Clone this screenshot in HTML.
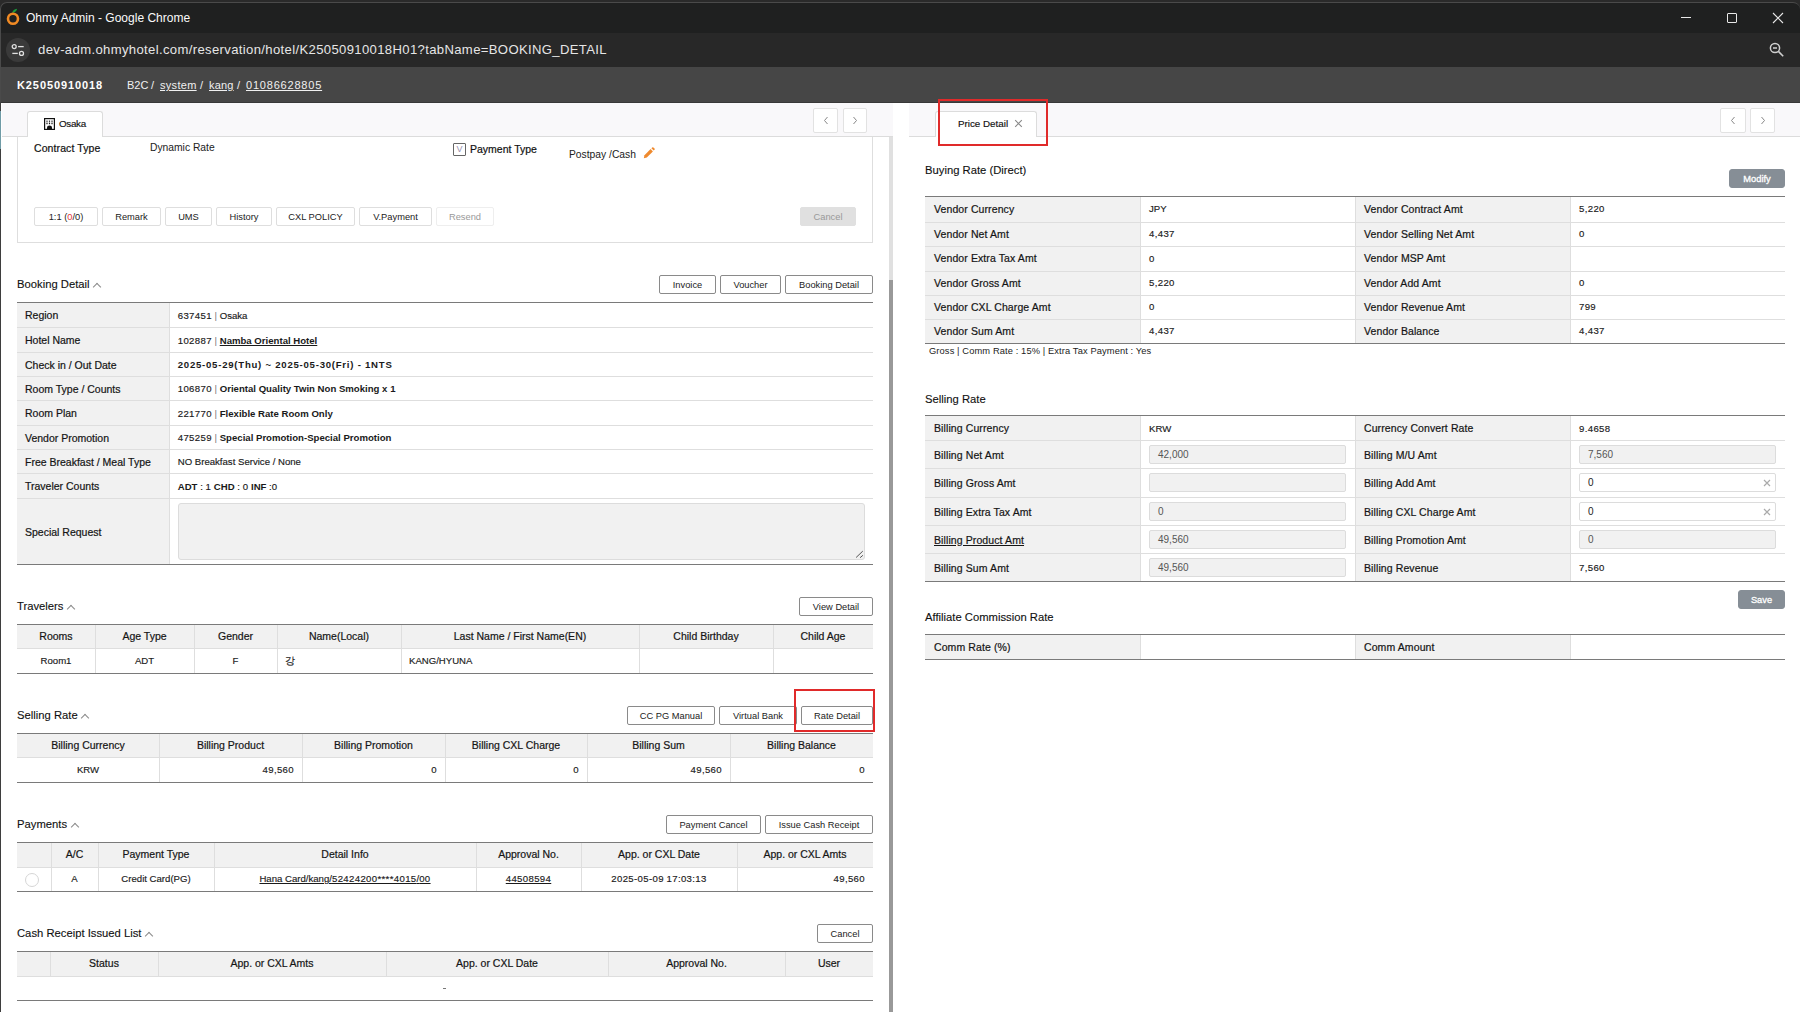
<!DOCTYPE html>
<html><head><meta charset="utf-8">
<style>
*{box-sizing:border-box;margin:0;padding:0}
html,body{width:1800px;height:1012px;overflow:hidden;background:#fff;font-family:"Liberation Sans",sans-serif;color:#222}
.a{position:absolute}
#outer{left:0;top:0;width:1800px;height:33px;background:#2a2a2a}
#title{left:0;top:2px;width:1800px;height:31px;background:#1f2020;border-top:1px solid #4a4a4a;border-left:1px solid #4a4a4a;border-top-left-radius:7px;border-top-right-radius:7px}
#url{left:0;top:33px;width:1800px;height:34px;background:#282828;border-left:1px solid #4a4a4a}
#hdr{left:0;top:67px;width:1800px;height:36px;background:#464646;border-left:1px solid #4a4a4a;border-bottom:1px solid #383838}
.tt{color:#fff;font-size:12px;white-space:nowrap}
.tabbar{background:#f9f8fa;border-bottom:1px solid #dcdcdc}
.tab{background:#fff;border:1px solid #dcdcdc;border-bottom:none;border-radius:3px 3px 0 0}
.nav{background:#fff;border:1px solid #e2e2e2;border-radius:2px}
.btn{position:absolute;height:19px;border:1px solid #8a8a8a;border-radius:2px;background:#fff;font-size:9.3px;line-height:19px;text-align:center;white-space:nowrap;color:#222}
.btnl{border-color:#dedede}
.sec{position:absolute;font-size:11.25px;white-space:nowrap;color:#111;-webkit-text-stroke:0.12px #111}
.caret{display:inline-block;width:6px;height:6px;border-left:1.5px solid #8a8a8a;border-top:1.5px solid #8a8a8a;transform:rotate(45deg);margin-left:4.5px;position:relative;top:1.5px}
table{border-collapse:collapse;table-layout:fixed;position:absolute}
td,th{font-size:10px;white-space:nowrap;overflow:hidden;padding:0 8px;border:1px solid #dedede;color:#222}
tr:first-child td,tr:first-child th{border-top:none}
td:first-child,th:first-child{border-left:none}
td:last-child,th:last-child{border-right:none}
.tbl{border-top:1.5px solid #777;border-bottom:1.5px solid #777}
.lab{background:#f1f1f1;font-size:10.5px;color:#1a1a1a}
th{background:#f1f1f1;font-weight:normal;font-size:10.5px;text-align:center;color:#1a1a1a}
.c{text-align:center}
.r{text-align:right}
.b{font-weight:bold}
.u{text-decoration:underline}
.inp{position:absolute;height:19px;background:#f1f1f1;border:1px solid #dcdcdc;border-radius:2px;font-size:10px;line-height:17px;padding-left:8px;color:#555}
.inpw{background:#fff;color:#222}
.t{white-space:nowrap}
.t b{font-weight:bold;-webkit-text-stroke:0}
.sep{font-style:normal;color:#777;-webkit-text-stroke:0}
.d{letter-spacing:0.35px}
.wide,.wide .d{letter-spacing:0.75px}
</style></head><body>
<!-- chrome -->
<div id="outer" class="a"></div>
<div id="title" class="a"></div>
<div id="url" class="a"></div>
<div id="hdr" class="a"></div>

<svg class="a" style="left:0px;top:0px" width="24" height="28" viewBox="0 0 24 28">
<path d="M12.2 12.9 C12.4 10.9 14 9.2 17.1 8.8 C16.8 11 15 12.6 12.2 12.9Z" fill="#1b9b3c"/>
<circle cx="13" cy="18.8" r="5" fill="none" stroke="#f08a24" stroke-width="2.6"/>
</svg>
<div class="a tt" style="left:26px;top:10px;font-size:12px;line-height:16px;color:#fafafa">Ohmy Admin - Google Chrome</div>
<div class="a" style="left:1681px;top:17px;width:10px;height:1px;background:#e8e8e8"></div>
<div class="a" style="left:1727px;top:13px;width:10px;height:10px;border:1px solid #e8e8e8;border-radius:1px"></div>
<svg class="a" style="left:1772px;top:12px" width="12" height="12" viewBox="0 0 12 12"><path d="M1 1L11 11M11 1L1 11" stroke="#e8e8e8" stroke-width="1.1"/></svg>
<div class="a" style="left:6px;top:38px;width:24px;height:24px;border-radius:12px;background:#3a3a3a"></div>
<svg class="a" style="left:11px;top:43px" width="14" height="14" viewBox="0 0 14 14">
<circle cx="3.2" cy="3.6" r="2" fill="none" stroke="#e0e0e0" stroke-width="1.3"/><path d="M7.1 3.6H12.7" stroke="#e0e0e0" stroke-width="1.3"/>
<circle cx="10.5" cy="10.4" r="2" fill="none" stroke="#e0e0e0" stroke-width="1.3"/><path d="M1.3 10.4H6.8" stroke="#e0e0e0" stroke-width="1.3"/>
</svg>
<div class="a tt" style="left:38px;top:41px;font-size:13.1px;line-height:17px;letter-spacing:0.35px;color:#e6e6e6">dev-adm.ohmyhotel.com/reservation/hotel/K25050910018H01?tabName=BOOKING_DETAIL</div>
<svg class="a" style="left:1768px;top:41px" width="18" height="18" viewBox="0 0 18 18"><circle cx="7" cy="7" r="4.6" fill="none" stroke="#cfcfcf" stroke-width="1.5"/><path d="M5 7H9" stroke="#cfcfcf" stroke-width="1.5"/><path d="M10.4 10.4L15.2 15.2" stroke="#cfcfcf" stroke-width="1.6"/></svg>
<div class="a tt b" style="left:17px;top:77px;font-size:11px;line-height:16px;letter-spacing:0.9px">K25050910018</div>
<div class="a tt" style="left:127px;top:77px;font-size:11px;line-height:16px;color:#f0f0f0">B2C</div>
<div class="a tt" style="left:151px;top:77px;font-size:11px;line-height:16px;color:#f0f0f0">/</div>
<div class="a tt u" style="left:160px;top:77px;font-size:11px;line-height:16px;letter-spacing:0.3px;color:#f0f0f0">system</div>
<div class="a tt" style="left:200px;top:77px;font-size:11px;line-height:16px;color:#f0f0f0">/</div>
<div class="a tt u" style="left:209px;top:77px;font-size:11px;line-height:16px;letter-spacing:0.2px;color:#f0f0f0">kang</div>
<div class="a tt" style="left:237px;top:77px;font-size:11px;line-height:16px;color:#f0f0f0">/</div>
<div class="a tt u" style="left:246px;top:77px;font-size:11px;line-height:16px;letter-spacing:0.8px;color:#f0f0f0">01086628805</div>

<!-- LEFT PANEL -->
<div class="a" style="left:0;top:103px;width:1px;height:909px;background:#3e3e3e"></div>
<div class="a" style="left:0;top:111px;width:1px;height:38px;background:#6f9ba6"></div>
<div class="a" style="left:17px;top:120px;width:856px;height:123px;border:1px solid #dedede"></div>
<div class="a tabbar" style="left:2px;top:103px;width:891px;height:34px"></div>
<div class="a tab" style="left:27px;top:111px;width:76px;height:26px"></div>
<svg class="a" style="left:44px;top:118px" width="11" height="12" viewBox="0 0 11 12"><rect x="0" y="0" width="11" height="12" fill="#111"/><rect x="1.2" y="1.2" width="8.6" height="9.6" fill="#fff"/><rect x="2.4" y="2.6" width="1.2" height="1.2" fill="#111"/><rect x="4.9" y="2.6" width="1.2" height="1.2" fill="#111"/><rect x="7.4" y="2.6" width="1.2" height="1.2" fill="#111"/><rect x="2.4" y="4.6" width="1.2" height="1.6" fill="#111"/><rect x="4.9" y="4.6" width="1.2" height="1.6" fill="#111"/><rect x="7.4" y="4.6" width="1.2" height="1.6" fill="#111"/><path d="M3 12V9.4Q3 7.6 5.5 7.6Q8 7.6 8 9.4V12Z" fill="#111"/></svg>
<div class="a" style="left:59px;top:117px;font-size:9.8px;line-height:13px;letter-spacing:-0.3px;white-space:nowrap;color:#111;-webkit-text-stroke:0.15px #111">Osaka</div>
<div class="a nav" style="left:813px;top:108px;width:25px;height:25px"></div>
<div class="a nav" style="left:843px;top:108px;width:24px;height:25px"></div>
<svg class="a" style="left:822px;top:116px" width="8" height="9" viewBox="0 0 8 9"><path d="M5.5 1L2.5 4.5L5.5 8" fill="none" stroke="#888" stroke-width="1"/></svg>
<svg class="a" style="left:851px;top:116px" width="8" height="9" viewBox="0 0 8 9"><path d="M2.5 1L5.5 4.5L2.5 8" fill="none" stroke="#888" stroke-width="1"/></svg>
<div class="a" style="left:889px;top:137px;width:4px;height:143px;background:#e0e0e0"></div>
<div class="a" style="left:889px;top:280px;width:4px;height:732px;background:#999"></div>

<div class="a" style="left:34px;top:140.5px;font-size:10.5px;line-height:14px;letter-spacing:0.1px;white-space:nowrap;color:#111;-webkit-text-stroke:0.2px #111">Contract Type</div>
<div class="a" style="left:150px;top:140.5px;font-size:10.3px;line-height:14px;white-space:nowrap;color:#222">Dynamic Rate</div>
<div class="a" style="left:453px;top:143px;width:13px;height:13px;border:1px solid #666;border-radius:1px;font-size:9px;line-height:11px;text-align:center;color:#9a8fb0">V</div>
<div class="a" style="left:470px;top:141.5px;font-size:10.5px;line-height:14px;white-space:nowrap;color:#111;-webkit-text-stroke:0.2px #111">Payment Type</div>
<div class="a" style="left:569px;top:147.5px;font-size:10.3px;line-height:14px;white-space:nowrap;color:#222">Postpay /Cash</div>
<svg class="a" style="left:643px;top:147px" width="12" height="12" viewBox="0 0 12 12"><path d="M0.8 11.2L1.5 8.2L7.6 2.1L9.9 4.4L3.8 10.5Z" fill="#ef8a2e"/><path d="M8.4 1.3L9.2 0.5Q9.8 -0.1 10.4 0.5L11.5 1.6Q12.1 2.2 11.5 2.8L10.7 3.6Z" fill="#ef8a2e"/></svg>

<div class="btn btnl" style="left:34px;top:207px;width:64px">1:1 (<span style="color:#e53935">0</span>/0)</div>
<div class="btn btnl" style="left:102px;top:207px;width:59px">Remark</div>
<div class="btn btnl" style="left:165px;top:207px;width:47px">UMS</div>
<div class="btn btnl" style="left:216px;top:207px;width:56px">History</div>
<div class="btn btnl" style="left:276px;top:207px;width:79px">CXL POLICY</div>
<div class="btn btnl" style="left:359px;top:207px;width:73px">V.Payment</div>
<div class="btn btnl" style="left:436px;top:207px;width:58px;color:#999;border-color:#eee">Resend</div>
<div class="btn" style="left:800px;top:207px;width:56px;background:#e0e0e0;border-color:#e0e0e0;color:#999">Cancel</div>

<!--GEN-->
<div class="a sec" style="left:17px;top:278px">Booking Detail<i class=caret></i></div>
<div class="btn" style="left:659px;top:275px;width:57px;height:19px;line-height:19px">Invoice</div>
<div class="btn" style="left:720px;top:275px;width:61px;height:19px;line-height:19px">Voucher</div>
<div class="btn" style="left:785px;top:275px;width:88px;height:19px;line-height:19px">Booking Detail</div>
<div class="a" style="left:17px;top:302px;width:152px;height:25px;background:#f1f1f1"></div>
<div class="a" style="left:17px;top:327px;width:152px;height:25px;background:#f1f1f1"></div>
<div class="a" style="left:17px;top:352px;width:152px;height:24px;background:#f1f1f1"></div>
<div class="a" style="left:17px;top:376px;width:152px;height:24px;background:#f1f1f1"></div>
<div class="a" style="left:17px;top:400px;width:152px;height:25px;background:#f1f1f1"></div>
<div class="a" style="left:17px;top:425px;width:152px;height:24px;background:#f1f1f1"></div>
<div class="a" style="left:17px;top:449px;width:152px;height:24px;background:#f1f1f1"></div>
<div class="a" style="left:17px;top:473px;width:152px;height:25px;background:#f1f1f1"></div>
<div class="a" style="left:17px;top:498px;width:152px;height:66px;background:#f1f1f1"></div>
<div class="a" style="left:17px;top:327px;width:856px;height:1px;background:#dedede"></div>
<div class="a" style="left:17px;top:352px;width:856px;height:1px;background:#dedede"></div>
<div class="a" style="left:17px;top:376px;width:856px;height:1px;background:#dedede"></div>
<div class="a" style="left:17px;top:400px;width:856px;height:1px;background:#dedede"></div>
<div class="a" style="left:17px;top:425px;width:856px;height:1px;background:#dedede"></div>
<div class="a" style="left:17px;top:449px;width:856px;height:1px;background:#dedede"></div>
<div class="a" style="left:17px;top:473px;width:856px;height:1px;background:#dedede"></div>
<div class="a" style="left:17px;top:498px;width:856px;height:1px;background:#dedede"></div>
<div class="a" style="left:169px;top:302px;width:1px;height:262px;background:#dedede"></div>
<div class="a" style="left:17px;top:302px;width:856px;height:1.3px;background:#7a7a7a"></div>
<div class="a" style="left:17px;top:564px;width:856px;height:1.3px;background:#7a7a7a"></div>
<div class="a t" style="left:25px;top:302.7px;height:25px;line-height:25px;font-size:10.5px;color:#151515;font-weight:normal;-webkit-text-stroke:0.2px #151515;letter-spacing:0px;">Region</div>
<div class="a t" style="left:177.75px;top:302.7px;height:25px;line-height:25px;font-size:9.6px;color:#1a1a1a;font-weight:normal;-webkit-text-stroke:0.15px #1a1a1a;"><span class=d>637451</span> <i class=sep>|</i> Osaka</div>
<div class="a t" style="left:25px;top:327.7px;height:25px;line-height:25px;font-size:10.5px;color:#151515;font-weight:normal;-webkit-text-stroke:0.2px #151515;letter-spacing:0px;">Hotel Name</div>
<div class="a t" style="left:177.75px;top:327.7px;height:25px;line-height:25px;font-size:9.6px;color:#1a1a1a;font-weight:normal;-webkit-text-stroke:0.15px #1a1a1a;"><span class=d>102887</span> <i class=sep>|</i> <b class=u>Namba Oriental Hotel</b></div>
<div class="a t" style="left:25px;top:352.7px;height:24px;line-height:24px;font-size:10.5px;color:#151515;font-weight:normal;-webkit-text-stroke:0.2px #151515;letter-spacing:0px;">Check in / Out Date</div>
<div class="a t" style="left:177.75px;top:352.7px;height:24px;line-height:24px;font-size:9.6px;color:#1a1a1a;font-weight:normal;-webkit-text-stroke:0.15px #1a1a1a;"><b class=wide><span class=d>2025-05-29</span>(Thu) ~ <span class=d>2025-05-30</span>(Fri) - <span class=d>1</span>NTS</b></div>
<div class="a t" style="left:25px;top:376.7px;height:24px;line-height:24px;font-size:10.5px;color:#151515;font-weight:normal;-webkit-text-stroke:0.2px #151515;letter-spacing:0px;">Room Type / Counts</div>
<div class="a t" style="left:177.75px;top:376.7px;height:24px;line-height:24px;font-size:9.6px;color:#1a1a1a;font-weight:normal;-webkit-text-stroke:0.15px #1a1a1a;"><span class=d>106870</span> <i class=sep>|</i> <b>Oriental Quality Twin Non Smoking x <span class=d>1</span></b></div>
<div class="a t" style="left:25px;top:400.7px;height:25px;line-height:25px;font-size:10.5px;color:#151515;font-weight:normal;-webkit-text-stroke:0.2px #151515;letter-spacing:0px;">Room Plan</div>
<div class="a t" style="left:177.75px;top:400.7px;height:25px;line-height:25px;font-size:9.6px;color:#1a1a1a;font-weight:normal;-webkit-text-stroke:0.15px #1a1a1a;"><span class=d>221770</span> <i class=sep>|</i> <b>Flexible Rate Room Only</b></div>
<div class="a t" style="left:25px;top:425.7px;height:24px;line-height:24px;font-size:10.5px;color:#151515;font-weight:normal;-webkit-text-stroke:0.2px #151515;letter-spacing:0px;">Vendor Promotion</div>
<div class="a t" style="left:177.75px;top:425.7px;height:24px;line-height:24px;font-size:9.6px;color:#1a1a1a;font-weight:normal;-webkit-text-stroke:0.15px #1a1a1a;"><span class=d>475259</span> <i class=sep>|</i> <b>Special Promotion-Special Promotion</b></div>
<div class="a t" style="left:25px;top:449.7px;height:24px;line-height:24px;font-size:10.5px;color:#151515;font-weight:normal;-webkit-text-stroke:0.2px #151515;letter-spacing:0px;">Free Breakfast / Meal Type</div>
<div class="a t" style="left:177.75px;top:449.7px;height:24px;line-height:24px;font-size:9.6px;color:#1a1a1a;font-weight:normal;-webkit-text-stroke:0.15px #1a1a1a;">NO Breakfast Service / None</div>
<div class="a t" style="left:25px;top:473.7px;height:25px;line-height:25px;font-size:10.5px;color:#151515;font-weight:normal;-webkit-text-stroke:0.2px #151515;letter-spacing:0px;">Traveler Counts</div>
<div class="a t" style="left:177.75px;top:473.7px;height:25px;line-height:25px;font-size:9.6px;color:#1a1a1a;font-weight:normal;-webkit-text-stroke:0.15px #1a1a1a;"><b>ADT</b> : <span class=d>1</span> <b>CHD</b> : <span class=d>0</span> <b>INF</b> :<span class=d>0</span></div>
<div class="a t" style="left:25px;top:498.7px;height:66px;line-height:66px;font-size:10.5px;color:#151515;font-weight:normal;-webkit-text-stroke:0.2px #151515;letter-spacing:0px;">Special Request</div>
<div class="a" style="left:178px;top:503px;width:687px;height:57px;background:#f1f1f1;border:1px solid #dcdcdc;border-radius:3px"></div>
<svg class="a" style="left:852px;top:547px" width="12" height="12" viewBox="0 0 12 12"><path d="M4.1 10.5L10.8 4.1M8.1 10.7L10.9 8.3" stroke="#555" stroke-width="1"/></svg>
<div class="a sec" style="left:17px;top:600px">Travelers<i class=caret></i></div>
<div class="btn" style="left:799px;top:597px;width:74px;height:19px;line-height:19px">View Detail</div>
<div class="a" style="left:17px;top:624px;width:78px;height:24px;background:#f1f1f1"></div>
<div class="a" style="left:95px;top:624px;width:99px;height:24px;background:#f1f1f1"></div>
<div class="a" style="left:194px;top:624px;width:83px;height:24px;background:#f1f1f1"></div>
<div class="a" style="left:277px;top:624px;width:124px;height:24px;background:#f1f1f1"></div>
<div class="a" style="left:401px;top:624px;width:238px;height:24px;background:#f1f1f1"></div>
<div class="a" style="left:639px;top:624px;width:134px;height:24px;background:#f1f1f1"></div>
<div class="a" style="left:773px;top:624px;width:100px;height:24px;background:#f1f1f1"></div>
<div class="a" style="left:17px;top:648px;width:856px;height:1px;background:#dedede"></div>
<div class="a" style="left:95px;top:624px;width:1px;height:49px;background:#dedede"></div>
<div class="a" style="left:194px;top:624px;width:1px;height:49px;background:#dedede"></div>
<div class="a" style="left:277px;top:624px;width:1px;height:49px;background:#dedede"></div>
<div class="a" style="left:401px;top:624px;width:1px;height:49px;background:#dedede"></div>
<div class="a" style="left:639px;top:624px;width:1px;height:49px;background:#dedede"></div>
<div class="a" style="left:773px;top:624px;width:1px;height:49px;background:#dedede"></div>
<div class="a" style="left:17px;top:624px;width:856px;height:1.3px;background:#7a7a7a"></div>
<div class="a" style="left:17px;top:673px;width:856px;height:1.3px;background:#7a7a7a"></div>
<div class="a t" style="left:17px;width:78px;text-align:center;top:624px;height:24px;line-height:24px;font-size:10.5px;color:#151515;font-weight:normal;-webkit-text-stroke:0.2px #151515;letter-spacing:0px;">Rooms</div>
<div class="a t" style="left:95px;width:99px;text-align:center;top:624px;height:24px;line-height:24px;font-size:10.5px;color:#151515;font-weight:normal;-webkit-text-stroke:0.2px #151515;letter-spacing:0px;">Age Type</div>
<div class="a t" style="left:194px;width:83px;text-align:center;top:624px;height:24px;line-height:24px;font-size:10.5px;color:#151515;font-weight:normal;-webkit-text-stroke:0.2px #151515;letter-spacing:0px;">Gender</div>
<div class="a t" style="left:277px;width:124px;text-align:center;top:624px;height:24px;line-height:24px;font-size:10.5px;color:#151515;font-weight:normal;-webkit-text-stroke:0.2px #151515;letter-spacing:0px;">Name(Local)</div>
<div class="a t" style="left:401px;width:238px;text-align:center;top:624px;height:24px;line-height:24px;font-size:10.5px;color:#151515;font-weight:normal;-webkit-text-stroke:0.2px #151515;letter-spacing:0px;">Last Name / First Name(EN)</div>
<div class="a t" style="left:639px;width:134px;text-align:center;top:624px;height:24px;line-height:24px;font-size:10.5px;color:#151515;font-weight:normal;-webkit-text-stroke:0.2px #151515;letter-spacing:0px;">Child Birthday</div>
<div class="a t" style="left:773px;width:100px;text-align:center;top:624px;height:24px;line-height:24px;font-size:10.5px;color:#151515;font-weight:normal;-webkit-text-stroke:0.2px #151515;letter-spacing:0px;">Child Age</div>
<div class="a t" style="left:17px;width:78px;text-align:center;top:648px;height:25px;line-height:25px;font-size:9.6px;color:#1a1a1a;font-weight:normal;-webkit-text-stroke:0.15px #1a1a1a;">Room1</div>
<div class="a t" style="left:95px;width:99px;text-align:center;top:648px;height:25px;line-height:25px;font-size:9.6px;color:#1a1a1a;font-weight:normal;-webkit-text-stroke:0.15px #1a1a1a;">ADT</div>
<div class="a t" style="left:194px;width:83px;text-align:center;top:648px;height:25px;line-height:25px;font-size:9.6px;color:#1a1a1a;font-weight:normal;-webkit-text-stroke:0.15px #1a1a1a;">F</div>
<div class="a t" style="left:285px;top:648px;height:25px;line-height:25px;font-size:9.6px;color:#1a1a1a;font-weight:normal;-webkit-text-stroke:0.15px #1a1a1a;">강</div>
<div class="a t" style="left:409px;top:648px;height:25px;line-height:25px;font-size:9.6px;color:#1a1a1a;font-weight:normal;-webkit-text-stroke:0.15px #1a1a1a;">KANG/HYUNA</div>
<div class="a sec" style="left:17px;top:709px">Selling Rate<i class=caret></i></div>
<div class="btn" style="left:627px;top:706px;width:88px;height:19px;line-height:19px">CC PG Manual</div>
<div class="btn" style="left:719px;top:706px;width:78px;height:19px;line-height:19px">Virtual Bank</div>
<div class="btn" style="left:801px;top:706px;width:72px;height:19px;line-height:19px">Rate Detail</div>
<div class="a" style="left:17px;top:733px;width:142px;height:24px;background:#f1f1f1"></div>
<div class="a" style="left:159px;top:733px;width:143px;height:24px;background:#f1f1f1"></div>
<div class="a" style="left:302px;top:733px;width:143px;height:24px;background:#f1f1f1"></div>
<div class="a" style="left:445px;top:733px;width:142px;height:24px;background:#f1f1f1"></div>
<div class="a" style="left:587px;top:733px;width:143px;height:24px;background:#f1f1f1"></div>
<div class="a" style="left:730px;top:733px;width:143px;height:24px;background:#f1f1f1"></div>
<div class="a" style="left:17px;top:757px;width:856px;height:1px;background:#dedede"></div>
<div class="a" style="left:159px;top:733px;width:1px;height:49px;background:#dedede"></div>
<div class="a" style="left:302px;top:733px;width:1px;height:49px;background:#dedede"></div>
<div class="a" style="left:445px;top:733px;width:1px;height:49px;background:#dedede"></div>
<div class="a" style="left:587px;top:733px;width:1px;height:49px;background:#dedede"></div>
<div class="a" style="left:730px;top:733px;width:1px;height:49px;background:#dedede"></div>
<div class="a" style="left:17px;top:733px;width:856px;height:1.3px;background:#7a7a7a"></div>
<div class="a" style="left:17px;top:782px;width:856px;height:1.3px;background:#7a7a7a"></div>
<div class="a t" style="left:17px;width:142px;text-align:center;top:733px;height:24px;line-height:24px;font-size:10.5px;color:#151515;font-weight:normal;-webkit-text-stroke:0.2px #151515;letter-spacing:0px;">Billing Currency</div>
<div class="a t" style="left:159px;width:143px;text-align:center;top:733px;height:24px;line-height:24px;font-size:10.5px;color:#151515;font-weight:normal;-webkit-text-stroke:0.2px #151515;letter-spacing:0px;">Billing Product</div>
<div class="a t" style="left:302px;width:143px;text-align:center;top:733px;height:24px;line-height:24px;font-size:10.5px;color:#151515;font-weight:normal;-webkit-text-stroke:0.2px #151515;letter-spacing:0px;">Billing Promotion</div>
<div class="a t" style="left:445px;width:142px;text-align:center;top:733px;height:24px;line-height:24px;font-size:10.5px;color:#151515;font-weight:normal;-webkit-text-stroke:0.2px #151515;letter-spacing:0px;">Billing CXL Charge</div>
<div class="a t" style="left:587px;width:143px;text-align:center;top:733px;height:24px;line-height:24px;font-size:10.5px;color:#151515;font-weight:normal;-webkit-text-stroke:0.2px #151515;letter-spacing:0px;">Billing Sum</div>
<div class="a t" style="left:730px;width:143px;text-align:center;top:733px;height:24px;line-height:24px;font-size:10.5px;color:#151515;font-weight:normal;-webkit-text-stroke:0.2px #151515;letter-spacing:0px;">Billing Balance</div>
<div class="a t" style="left:17px;width:142px;text-align:center;top:757px;height:25px;line-height:25px;font-size:9.6px;color:#1a1a1a;font-weight:normal;-webkit-text-stroke:0.15px #1a1a1a;">KRW</div>
<div class="a t" style="left:159px;width:135px;text-align:right;top:757px;height:25px;line-height:25px;font-size:9.6px;color:#1a1a1a;font-weight:normal;-webkit-text-stroke:0.15px #1a1a1a;"><span class=d>49,560</span></div>
<div class="a t" style="left:302px;width:135px;text-align:right;top:757px;height:25px;line-height:25px;font-size:9.6px;color:#1a1a1a;font-weight:normal;-webkit-text-stroke:0.15px #1a1a1a;"><span class=d>0</span></div>
<div class="a t" style="left:445px;width:134px;text-align:right;top:757px;height:25px;line-height:25px;font-size:9.6px;color:#1a1a1a;font-weight:normal;-webkit-text-stroke:0.15px #1a1a1a;"><span class=d>0</span></div>
<div class="a t" style="left:587px;width:135px;text-align:right;top:757px;height:25px;line-height:25px;font-size:9.6px;color:#1a1a1a;font-weight:normal;-webkit-text-stroke:0.15px #1a1a1a;"><span class=d>49,560</span></div>
<div class="a t" style="left:730px;width:135px;text-align:right;top:757px;height:25px;line-height:25px;font-size:9.6px;color:#1a1a1a;font-weight:normal;-webkit-text-stroke:0.15px #1a1a1a;"><span class=d>0</span></div>
<div class="a" style="left:794px;top:689px;width:81px;height:43px;border:2px solid #e02a2a"></div>
<div class="a sec" style="left:17px;top:818px">Payments<i class=caret></i></div>
<div class="btn" style="left:666px;top:815px;width:95px;height:19px;line-height:19px">Payment Cancel</div>
<div class="btn" style="left:765px;top:815px;width:108px;height:19px;line-height:19px">Issue Cash Receipt</div>
<div class="a" style="left:17px;top:842px;width:34px;height:25px;background:#f1f1f1"></div>
<div class="a" style="left:51px;top:842px;width:47px;height:25px;background:#f1f1f1"></div>
<div class="a" style="left:98px;top:842px;width:116px;height:25px;background:#f1f1f1"></div>
<div class="a" style="left:214px;top:842px;width:262px;height:25px;background:#f1f1f1"></div>
<div class="a" style="left:476px;top:842px;width:105px;height:25px;background:#f1f1f1"></div>
<div class="a" style="left:581px;top:842px;width:156px;height:25px;background:#f1f1f1"></div>
<div class="a" style="left:737px;top:842px;width:136px;height:25px;background:#f1f1f1"></div>
<div class="a" style="left:17px;top:867px;width:856px;height:1px;background:#dedede"></div>
<div class="a" style="left:51px;top:842px;width:1px;height:49px;background:#dedede"></div>
<div class="a" style="left:98px;top:842px;width:1px;height:49px;background:#dedede"></div>
<div class="a" style="left:214px;top:842px;width:1px;height:49px;background:#dedede"></div>
<div class="a" style="left:476px;top:842px;width:1px;height:49px;background:#dedede"></div>
<div class="a" style="left:581px;top:842px;width:1px;height:49px;background:#dedede"></div>
<div class="a" style="left:737px;top:842px;width:1px;height:49px;background:#dedede"></div>
<div class="a" style="left:17px;top:842px;width:856px;height:1.3px;background:#7a7a7a"></div>
<div class="a" style="left:17px;top:891px;width:856px;height:1.3px;background:#7a7a7a"></div>
<div class="a t" style="left:51px;width:47px;text-align:center;top:842px;height:25px;line-height:25px;font-size:10.5px;color:#151515;font-weight:normal;-webkit-text-stroke:0.2px #151515;letter-spacing:0px;">A/C</div>
<div class="a t" style="left:98px;width:116px;text-align:center;top:842px;height:25px;line-height:25px;font-size:10.5px;color:#151515;font-weight:normal;-webkit-text-stroke:0.2px #151515;letter-spacing:0px;">Payment Type</div>
<div class="a t" style="left:214px;width:262px;text-align:center;top:842px;height:25px;line-height:25px;font-size:10.5px;color:#151515;font-weight:normal;-webkit-text-stroke:0.2px #151515;letter-spacing:0px;">Detail Info</div>
<div class="a t" style="left:476px;width:105px;text-align:center;top:842px;height:25px;line-height:25px;font-size:10.5px;color:#151515;font-weight:normal;-webkit-text-stroke:0.2px #151515;letter-spacing:0px;">Approval No.</div>
<div class="a t" style="left:581px;width:156px;text-align:center;top:842px;height:25px;line-height:25px;font-size:10.5px;color:#151515;font-weight:normal;-webkit-text-stroke:0.2px #151515;letter-spacing:0px;">App. or CXL Date</div>
<div class="a t" style="left:737px;width:136px;text-align:center;top:842px;height:25px;line-height:25px;font-size:10.5px;color:#151515;font-weight:normal;-webkit-text-stroke:0.2px #151515;letter-spacing:0px;">App. or CXL Amts</div>
<div class="a t" style="left:51px;width:47px;text-align:center;top:867px;height:24px;line-height:24px;font-size:9.6px;color:#1a1a1a;font-weight:normal;-webkit-text-stroke:0.15px #1a1a1a;">A</div>
<div class="a t" style="left:98px;width:116px;text-align:center;top:867px;height:24px;line-height:24px;font-size:9.6px;color:#1a1a1a;font-weight:normal;-webkit-text-stroke:0.15px #1a1a1a;">Credit Card(PG)</div>
<div class="a t" style="left:214px;width:262px;text-align:center;top:867px;height:24px;line-height:24px;font-size:9.6px;color:#1a1a1a;font-weight:normal;-webkit-text-stroke:0.15px #1a1a1a;"><span class=u>Hana Card/kang/<span class=d>52424200****4015</span>/<span class=d>00</span></span></div>
<div class="a t" style="left:476px;width:105px;text-align:center;top:867px;height:24px;line-height:24px;font-size:9.6px;color:#1a1a1a;font-weight:normal;-webkit-text-stroke:0.15px #1a1a1a;"><span class=u><span class=d>44508594</span></span></div>
<div class="a t" style="left:581px;width:156px;text-align:center;top:867px;height:24px;line-height:24px;font-size:9.6px;color:#1a1a1a;font-weight:normal;-webkit-text-stroke:0.15px #1a1a1a;"><span class=d>2025-05-09</span> <span class=d>17:03:13</span></div>
<div class="a t" style="left:737px;width:128px;text-align:right;top:867px;height:24px;line-height:24px;font-size:9.6px;color:#1a1a1a;font-weight:normal;-webkit-text-stroke:0.15px #1a1a1a;"><span class=d>49,560</span></div>
<div class="a" style="left:25px;top:873px;width:14px;height:14px;border:1px solid #d6d6d6;border-radius:50%;background:#fff"></div>
<div class="a sec" style="left:17px;top:927px">Cash Receipt Issued List<i class=caret></i></div>
<div class="btn" style="left:817px;top:924px;width:56px;height:19px;line-height:19px">Cancel</div>
<div class="a" style="left:17px;top:951px;width:33px;height:25px;background:#f1f1f1"></div>
<div class="a" style="left:50px;top:951px;width:108px;height:25px;background:#f1f1f1"></div>
<div class="a" style="left:158px;top:951px;width:228px;height:25px;background:#f1f1f1"></div>
<div class="a" style="left:386px;top:951px;width:222px;height:25px;background:#f1f1f1"></div>
<div class="a" style="left:608px;top:951px;width:177px;height:25px;background:#f1f1f1"></div>
<div class="a" style="left:785px;top:951px;width:88px;height:25px;background:#f1f1f1"></div>
<div class="a" style="left:17px;top:976px;width:856px;height:1px;background:#dedede"></div>
<div class="a" style="left:50px;top:951px;width:1px;height:25px;background:#dedede"></div>
<div class="a" style="left:158px;top:951px;width:1px;height:25px;background:#dedede"></div>
<div class="a" style="left:386px;top:951px;width:1px;height:25px;background:#dedede"></div>
<div class="a" style="left:608px;top:951px;width:1px;height:25px;background:#dedede"></div>
<div class="a" style="left:785px;top:951px;width:1px;height:25px;background:#dedede"></div>
<div class="a" style="left:17px;top:951px;width:856px;height:1.3px;background:#7a7a7a"></div>
<div class="a" style="left:17px;top:1000px;width:856px;height:1.3px;background:#7a7a7a"></div>
<div class="a t" style="left:50px;width:108px;text-align:center;top:951px;height:25px;line-height:25px;font-size:10.5px;color:#151515;font-weight:normal;-webkit-text-stroke:0.2px #151515;letter-spacing:0px;">Status</div>
<div class="a t" style="left:158px;width:228px;text-align:center;top:951px;height:25px;line-height:25px;font-size:10.5px;color:#151515;font-weight:normal;-webkit-text-stroke:0.2px #151515;letter-spacing:0px;">App. or CXL Amts</div>
<div class="a t" style="left:386px;width:222px;text-align:center;top:951px;height:25px;line-height:25px;font-size:10.5px;color:#151515;font-weight:normal;-webkit-text-stroke:0.2px #151515;letter-spacing:0px;">App. or CXL Date</div>
<div class="a t" style="left:608px;width:177px;text-align:center;top:951px;height:25px;line-height:25px;font-size:10.5px;color:#151515;font-weight:normal;-webkit-text-stroke:0.2px #151515;letter-spacing:0px;">Approval No.</div>
<div class="a t" style="left:785px;width:88px;text-align:center;top:951px;height:25px;line-height:25px;font-size:10.5px;color:#151515;font-weight:normal;-webkit-text-stroke:0.2px #151515;letter-spacing:0px;">User</div>
<div class="a" style="left:443px;top:988px;width:3px;height:1px;background:#777"></div>
<div class="a sec" style="left:925px;top:164px">Buying Rate (Direct)</div>
<div class="btn" style="left:1729px;top:169px;width:56px;height:19px;line-height:19px;border-radius:3px;background:#868e96;border-color:#868e96;color:#fff;-webkit-text-stroke:0.3px #fff">Modify</div>
<div class="a" style="left:925px;top:196px;width:215px;height:26px;background:#f1f1f1"></div>
<div class="a" style="left:1355px;top:196px;width:215px;height:26px;background:#f1f1f1"></div>
<div class="a" style="left:925px;top:222px;width:215px;height:24px;background:#f1f1f1"></div>
<div class="a" style="left:1355px;top:222px;width:215px;height:24px;background:#f1f1f1"></div>
<div class="a" style="left:925px;top:246px;width:215px;height:25px;background:#f1f1f1"></div>
<div class="a" style="left:1355px;top:246px;width:215px;height:25px;background:#f1f1f1"></div>
<div class="a" style="left:925px;top:271px;width:215px;height:24px;background:#f1f1f1"></div>
<div class="a" style="left:1355px;top:271px;width:215px;height:24px;background:#f1f1f1"></div>
<div class="a" style="left:925px;top:295px;width:215px;height:24px;background:#f1f1f1"></div>
<div class="a" style="left:1355px;top:295px;width:215px;height:24px;background:#f1f1f1"></div>
<div class="a" style="left:925px;top:319px;width:215px;height:24px;background:#f1f1f1"></div>
<div class="a" style="left:1355px;top:319px;width:215px;height:24px;background:#f1f1f1"></div>
<div class="a" style="left:925px;top:222px;width:860px;height:1px;background:#dedede"></div>
<div class="a" style="left:925px;top:246px;width:860px;height:1px;background:#dedede"></div>
<div class="a" style="left:925px;top:271px;width:860px;height:1px;background:#dedede"></div>
<div class="a" style="left:925px;top:295px;width:860px;height:1px;background:#dedede"></div>
<div class="a" style="left:925px;top:319px;width:860px;height:1px;background:#dedede"></div>
<div class="a" style="left:1140px;top:196px;width:1px;height:147px;background:#dedede"></div>
<div class="a" style="left:1355px;top:196px;width:1px;height:147px;background:#dedede"></div>
<div class="a" style="left:1570px;top:196px;width:1px;height:147px;background:#dedede"></div>
<div class="a" style="left:925px;top:196px;width:860px;height:1.3px;background:#7a7a7a"></div>
<div class="a" style="left:925px;top:343px;width:860px;height:1.3px;background:#7a7a7a"></div>
<div class="a t" style="left:934px;top:195.5px;height:26px;line-height:26px;font-size:10.5px;color:#151515;font-weight:normal;-webkit-text-stroke:0.2px #151515;letter-spacing:0.1px;">Vendor Currency</div>
<div class="a t" style="left:1149px;top:195.5px;height:26px;line-height:26px;font-size:9.6px;color:#1a1a1a;font-weight:normal;-webkit-text-stroke:0.15px #1a1a1a;">JPY</div>
<div class="a t" style="left:1364px;top:195.5px;height:26px;line-height:26px;font-size:10.5px;color:#151515;font-weight:normal;-webkit-text-stroke:0.2px #151515;letter-spacing:0.1px;">Vendor Contract Amt</div>
<div class="a t" style="left:1579px;top:195.5px;height:26px;line-height:26px;font-size:9.6px;color:#1a1a1a;font-weight:normal;-webkit-text-stroke:0.15px #1a1a1a;"><span class=d>5,220</span></div>
<div class="a t" style="left:934px;top:221.5px;height:24px;line-height:24px;font-size:10.5px;color:#151515;font-weight:normal;-webkit-text-stroke:0.2px #151515;letter-spacing:0.1px;">Vendor Net Amt</div>
<div class="a t" style="left:1149px;top:221.5px;height:24px;line-height:24px;font-size:9.6px;color:#1a1a1a;font-weight:normal;-webkit-text-stroke:0.15px #1a1a1a;"><span class=d>4,437</span></div>
<div class="a t" style="left:1364px;top:221.5px;height:24px;line-height:24px;font-size:10.5px;color:#151515;font-weight:normal;-webkit-text-stroke:0.2px #151515;letter-spacing:0.1px;">Vendor Selling Net Amt</div>
<div class="a t" style="left:1579px;top:221.5px;height:24px;line-height:24px;font-size:9.6px;color:#1a1a1a;font-weight:normal;-webkit-text-stroke:0.15px #1a1a1a;"><span class=d>0</span></div>
<div class="a t" style="left:934px;top:245.5px;height:25px;line-height:25px;font-size:10.5px;color:#151515;font-weight:normal;-webkit-text-stroke:0.2px #151515;letter-spacing:0.1px;">Vendor Extra Tax Amt</div>
<div class="a t" style="left:1149px;top:245.5px;height:25px;line-height:25px;font-size:9.6px;color:#1a1a1a;font-weight:normal;-webkit-text-stroke:0.15px #1a1a1a;"><span class=d>0</span></div>
<div class="a t" style="left:1364px;top:245.5px;height:25px;line-height:25px;font-size:10.5px;color:#151515;font-weight:normal;-webkit-text-stroke:0.2px #151515;letter-spacing:0.1px;">Vendor MSP Amt</div>
<div class="a t" style="left:934px;top:270.5px;height:24px;line-height:24px;font-size:10.5px;color:#151515;font-weight:normal;-webkit-text-stroke:0.2px #151515;letter-spacing:0.1px;">Vendor Gross Amt</div>
<div class="a t" style="left:1149px;top:270.5px;height:24px;line-height:24px;font-size:9.6px;color:#1a1a1a;font-weight:normal;-webkit-text-stroke:0.15px #1a1a1a;"><span class=d>5,220</span></div>
<div class="a t" style="left:1364px;top:270.5px;height:24px;line-height:24px;font-size:10.5px;color:#151515;font-weight:normal;-webkit-text-stroke:0.2px #151515;letter-spacing:0.1px;">Vendor Add Amt</div>
<div class="a t" style="left:1579px;top:270.5px;height:24px;line-height:24px;font-size:9.6px;color:#1a1a1a;font-weight:normal;-webkit-text-stroke:0.15px #1a1a1a;"><span class=d>0</span></div>
<div class="a t" style="left:934px;top:294.5px;height:24px;line-height:24px;font-size:10.5px;color:#151515;font-weight:normal;-webkit-text-stroke:0.2px #151515;letter-spacing:0.1px;">Vendor CXL Charge Amt</div>
<div class="a t" style="left:1149px;top:294.5px;height:24px;line-height:24px;font-size:9.6px;color:#1a1a1a;font-weight:normal;-webkit-text-stroke:0.15px #1a1a1a;"><span class=d>0</span></div>
<div class="a t" style="left:1364px;top:294.5px;height:24px;line-height:24px;font-size:10.5px;color:#151515;font-weight:normal;-webkit-text-stroke:0.2px #151515;letter-spacing:0.1px;">Vendor Revenue Amt</div>
<div class="a t" style="left:1579px;top:294.5px;height:24px;line-height:24px;font-size:9.6px;color:#1a1a1a;font-weight:normal;-webkit-text-stroke:0.15px #1a1a1a;"><span class=d>799</span></div>
<div class="a t" style="left:934px;top:318.5px;height:24px;line-height:24px;font-size:10.5px;color:#151515;font-weight:normal;-webkit-text-stroke:0.2px #151515;letter-spacing:0.1px;">Vendor Sum Amt</div>
<div class="a t" style="left:1149px;top:318.5px;height:24px;line-height:24px;font-size:9.6px;color:#1a1a1a;font-weight:normal;-webkit-text-stroke:0.15px #1a1a1a;"><span class=d>4,437</span></div>
<div class="a t" style="left:1364px;top:318.5px;height:24px;line-height:24px;font-size:10.5px;color:#151515;font-weight:normal;-webkit-text-stroke:0.2px #151515;letter-spacing:0.1px;">Vendor Balance</div>
<div class="a t" style="left:1579px;top:318.5px;height:24px;line-height:24px;font-size:9.6px;color:#1a1a1a;font-weight:normal;-webkit-text-stroke:0.15px #1a1a1a;"><span class=d>4,437</span></div>
<div class="a t" style="left:929px;top:345px;height:13px;line-height:13px;font-size:9.3px;letter-spacing:0.12px;color:#222">Gross | Comm Rate : 15% | Extra Tax Payment : Yes</div>
<div class="a sec" style="left:925px;top:393px">Selling Rate</div>
<div class="a" style="left:925px;top:415px;width:215px;height:25px;background:#f1f1f1"></div>
<div class="a" style="left:1355px;top:415px;width:215px;height:25px;background:#f1f1f1"></div>
<div class="a" style="left:925px;top:440px;width:215px;height:28px;background:#f1f1f1"></div>
<div class="a" style="left:1355px;top:440px;width:215px;height:28px;background:#f1f1f1"></div>
<div class="a" style="left:925px;top:468px;width:215px;height:29px;background:#f1f1f1"></div>
<div class="a" style="left:1355px;top:468px;width:215px;height:29px;background:#f1f1f1"></div>
<div class="a" style="left:925px;top:497px;width:215px;height:28px;background:#f1f1f1"></div>
<div class="a" style="left:1355px;top:497px;width:215px;height:28px;background:#f1f1f1"></div>
<div class="a" style="left:925px;top:525px;width:215px;height:28px;background:#f1f1f1"></div>
<div class="a" style="left:1355px;top:525px;width:215px;height:28px;background:#f1f1f1"></div>
<div class="a" style="left:925px;top:553px;width:215px;height:28px;background:#f1f1f1"></div>
<div class="a" style="left:1355px;top:553px;width:215px;height:28px;background:#f1f1f1"></div>
<div class="a" style="left:925px;top:440px;width:860px;height:1px;background:#dedede"></div>
<div class="a" style="left:925px;top:468px;width:860px;height:1px;background:#dedede"></div>
<div class="a" style="left:925px;top:497px;width:860px;height:1px;background:#dedede"></div>
<div class="a" style="left:925px;top:525px;width:860px;height:1px;background:#dedede"></div>
<div class="a" style="left:925px;top:553px;width:860px;height:1px;background:#dedede"></div>
<div class="a" style="left:1140px;top:415px;width:1px;height:166px;background:#dedede"></div>
<div class="a" style="left:1355px;top:415px;width:1px;height:166px;background:#dedede"></div>
<div class="a" style="left:1570px;top:415px;width:1px;height:166px;background:#dedede"></div>
<div class="a" style="left:925px;top:415px;width:860px;height:1.3px;background:#7a7a7a"></div>
<div class="a" style="left:925px;top:581px;width:860px;height:1.3px;background:#7a7a7a"></div>
<div class="a t" style="left:934px;top:415.5px;height:25px;line-height:25px;font-size:10.5px;color:#151515;font-weight:normal;-webkit-text-stroke:0.2px #151515;letter-spacing:0.1px;">Billing Currency</div>
<div class="a t" style="left:1149px;top:415.5px;height:25px;line-height:25px;font-size:9.6px;color:#1a1a1a;font-weight:normal;-webkit-text-stroke:0.15px #1a1a1a;">KRW</div>
<div class="a t" style="left:1364px;top:415.5px;height:25px;line-height:25px;font-size:10.5px;color:#151515;font-weight:normal;-webkit-text-stroke:0.2px #151515;letter-spacing:0.1px;">Currency Convert Rate</div>
<div class="a t" style="left:1579px;top:415.5px;height:25px;line-height:25px;font-size:9.6px;color:#1a1a1a;font-weight:normal;-webkit-text-stroke:0.15px #1a1a1a;"><span class=d>9.4658</span></div>
<div class="a t" style="left:934px;top:440.5px;height:28px;line-height:28px;font-size:10.5px;color:#151515;font-weight:normal;-webkit-text-stroke:0.2px #151515;letter-spacing:0.1px;">Billing Net Amt</div>
<div class="a t" style="left:1364px;top:440.5px;height:28px;line-height:28px;font-size:10.5px;color:#151515;font-weight:normal;-webkit-text-stroke:0.2px #151515;letter-spacing:0.1px;">Billing M/U Amt</div>
<div class="a t" style="left:934px;top:468.5px;height:29px;line-height:29px;font-size:10.5px;color:#151515;font-weight:normal;-webkit-text-stroke:0.2px #151515;letter-spacing:0.1px;">Billing Gross Amt</div>
<div class="a t" style="left:1364px;top:468.5px;height:29px;line-height:29px;font-size:10.5px;color:#151515;font-weight:normal;-webkit-text-stroke:0.2px #151515;letter-spacing:0.1px;">Billing Add Amt</div>
<div class="a t" style="left:934px;top:497.5px;height:28px;line-height:28px;font-size:10.5px;color:#151515;font-weight:normal;-webkit-text-stroke:0.2px #151515;letter-spacing:0.1px;">Billing Extra Tax Amt</div>
<div class="a t" style="left:1364px;top:497.5px;height:28px;line-height:28px;font-size:10.5px;color:#151515;font-weight:normal;-webkit-text-stroke:0.2px #151515;letter-spacing:0.1px;">Billing CXL Charge Amt</div>
<div class="a t" style="left:934px;top:525.5px;height:28px;line-height:28px;font-size:10.5px;color:#151515;font-weight:normal;-webkit-text-stroke:0.2px #151515;letter-spacing:0.1px;"><span class=u>Billing Product Amt</span></div>
<div class="a t" style="left:1364px;top:525.5px;height:28px;line-height:28px;font-size:10.5px;color:#151515;font-weight:normal;-webkit-text-stroke:0.2px #151515;letter-spacing:0.1px;">Billing Promotion Amt</div>
<div class="a t" style="left:934px;top:553.5px;height:28px;line-height:28px;font-size:10.5px;color:#151515;font-weight:normal;-webkit-text-stroke:0.2px #151515;letter-spacing:0.1px;">Billing Sum Amt</div>
<div class="a t" style="left:1364px;top:553.5px;height:28px;line-height:28px;font-size:10.5px;color:#151515;font-weight:normal;-webkit-text-stroke:0.2px #151515;letter-spacing:0.1px;">Billing Revenue</div>
<div class="a t" style="left:1579px;top:553.5px;height:28px;line-height:28px;font-size:9.6px;color:#1a1a1a;font-weight:normal;-webkit-text-stroke:0.15px #1a1a1a;"><span class=d>7,560</span></div>
<div class="inp" style="left:1149px;top:445px;width:197px;height:19px;line-height:17px">42,000</div>
<div class="inp" style="left:1579px;top:445px;width:197px;height:19px;line-height:17px">7,560</div>
<div class="inp" style="left:1149px;top:473px;width:197px;height:19px;line-height:17px"></div>
<div class="inp inpw" style="left:1579px;top:473px;width:197px;height:19px;line-height:17px">0</div>
<svg class="a" style="left:1763px;top:478.5px" width="8" height="8" viewBox="0 0 8 8"><path d="M1 1L7 7M7 1L1 7" stroke="#aaa" stroke-width="1.2"/></svg>
<div class="inp" style="left:1149px;top:502px;width:197px;height:19px;line-height:17px">0</div>
<div class="inp inpw" style="left:1579px;top:502px;width:197px;height:19px;line-height:17px">0</div>
<svg class="a" style="left:1763px;top:507.5px" width="8" height="8" viewBox="0 0 8 8"><path d="M1 1L7 7M7 1L1 7" stroke="#aaa" stroke-width="1.2"/></svg>
<div class="inp" style="left:1149px;top:530px;width:197px;height:19px;line-height:17px">49,560</div>
<div class="inp" style="left:1579px;top:530px;width:197px;height:19px;line-height:17px">0</div>
<div class="inp" style="left:1149px;top:558px;width:197px;height:19px;line-height:17px">49,560</div>
<div class="btn" style="left:1738px;top:590px;width:47px;height:19px;line-height:19px;border-radius:3px;background:#868e96;border-color:#868e96;color:#fff;-webkit-text-stroke:0.3px #fff">Save</div>
<div class="a sec" style="left:925px;top:611px">Affiliate Commission Rate</div>
<div class="a" style="left:925px;top:634px;width:215px;height:25px;background:#f1f1f1"></div>
<div class="a" style="left:1355px;top:634px;width:215px;height:25px;background:#f1f1f1"></div>
<div class="a" style="left:1140px;top:634px;width:1px;height:25px;background:#dedede"></div>
<div class="a" style="left:1355px;top:634px;width:1px;height:25px;background:#dedede"></div>
<div class="a" style="left:1570px;top:634px;width:1px;height:25px;background:#dedede"></div>
<div class="a" style="left:925px;top:634px;width:860px;height:1.3px;background:#7a7a7a"></div>
<div class="a" style="left:925px;top:659px;width:860px;height:1.3px;background:#7a7a7a"></div>
<div class="a t" style="left:934px;top:634.5px;height:25px;line-height:25px;font-size:10.5px;color:#151515;font-weight:normal;-webkit-text-stroke:0.2px #151515;letter-spacing:0.1px;">Comm Rate (%)</div>
<div class="a t" style="left:1364px;top:634.5px;height:25px;line-height:25px;font-size:10.5px;color:#151515;font-weight:normal;-webkit-text-stroke:0.2px #151515;letter-spacing:0.1px;">Comm Amount</div>
<!--/GEN-->
<!-- RIGHT PANEL tab bar -->
<div class="a tabbar" style="left:909px;top:103px;width:891px;height:34px"></div>
<div class="a tab" style="left:935px;top:111px;width:102px;height:26px"></div>
<div class="a" style="left:958px;top:117px;font-size:9.8px;line-height:13px;white-space:nowrap;color:#111;-webkit-text-stroke:0.15px #111">Price Detail</div>
<svg class="a" style="left:1014px;top:119px" width="9" height="9" viewBox="0 0 9 9"><path d="M1.2 1.2L7.8 7.8M7.8 1.2L1.2 7.8" stroke="#888" stroke-width="1.1"/></svg>
<div class="a nav" style="left:1720px;top:108px;width:26px;height:25px"></div>
<div class="a nav" style="left:1750px;top:108px;width:25px;height:25px"></div>
<svg class="a" style="left:1729px;top:116px" width="8" height="9" viewBox="0 0 8 9"><path d="M5.5 1L2.5 4.5L5.5 8" fill="none" stroke="#888" stroke-width="1"/></svg>
<svg class="a" style="left:1759px;top:116px" width="8" height="9" viewBox="0 0 8 9"><path d="M2.5 1L5.5 4.5L2.5 8" fill="none" stroke="#888" stroke-width="1"/></svg>
<div class="a" style="left:938px;top:99px;width:110px;height:47px;border:2px solid #e02a2a"></div>
</body></html>
